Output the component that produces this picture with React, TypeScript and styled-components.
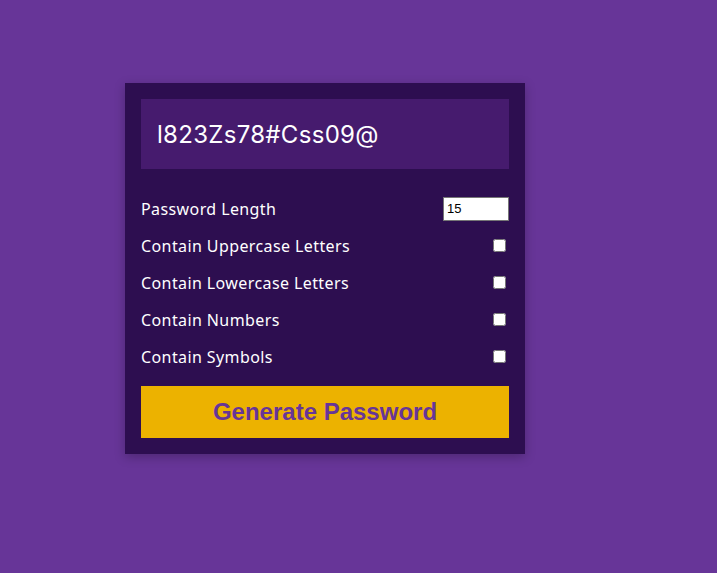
import React from "react";
import styled, { createGlobalStyle } from "styled-components";

const Global = createGlobalStyle`
  html, body { margin: 0; padding: 0; }
  body {
    background: #673598;
    font-family: "Open Sans", "Noto Sans", sans-serif;
    height: 573px;
    overflow: hidden;
  }
`;

const Page = styled.div`
  padding: 83px 0 0 125px;
`;

const Card = styled.div`
  width: 400px;
  box-sizing: border-box;
  background: #2d0e50;
  padding: 16px;
  box-shadow: 0 3px 10px rgba(0, 0, 0, 0.25);
`;

const Result = styled.div`
  height: 70px;
  background: #461b6e;
  color: #fff;
  display: flex;
  align-items: center;
  padding: 0 16px;
  font-family: "Inter", "Open Sans", sans-serif;
  font-size: 24px;
  letter-spacing: 0.3px;
  margin-bottom: 21px;
`;

const Settings = styled.div`
  display: flex;
  flex-direction: column;
`;

const Row = styled.div`
  display: flex;
  align-items: center;
  justify-content: space-between;
  height: 37px;
  color: #fff;
  font-size: 16px;
  letter-spacing: 0.4px;
  font-family: "Noto Sans", sans-serif;
`;

const NumInput = styled.input`
  width: 66px;
  height: 24px;
  box-sizing: border-box;
  border: 1px solid #767676;
  font-family: "Liberation Sans", Arial, sans-serif;
  font-size: 13px;
  letter-spacing: 0;
  padding: 1px 3px;
  margin: 0;
`;

const Check = styled.input`
  width: 13px;
  height: 13px;
  margin: 0 3px 0 0;
`;

const Button = styled.button`
  margin-top: 11px;
  width: 100%;
  height: 52px;
  border: none;
  background: #ecb200;
  color: #673598;
  font-family: "Liberation Sans", Arial, sans-serif;
  font-weight: bold;
  font-size: 24px;
  cursor: pointer;
`;

const options = [
  "Contain Uppercase Letters",
  "Contain Lowercase Letters",
  "Contain Numbers",
  "Contain Symbols",
];

export default function App() {
  return (
    <>
      <Global />
      <Page>
        <Card>
          <Result>l823Zs78#Css09@</Result>
          <Settings>
            <Row>
              <span>Password Length</span>
              <NumInput type="number" defaultValue={15} />
            </Row>
            {options.map((o) => (
              <Row key={o}>
                <span>{o}</span>
                <Check type="checkbox" />
              </Row>
            ))}
          </Settings>
          <Button>Generate Password</Button>
        </Card>
      </Page>
    </>
  );
}
